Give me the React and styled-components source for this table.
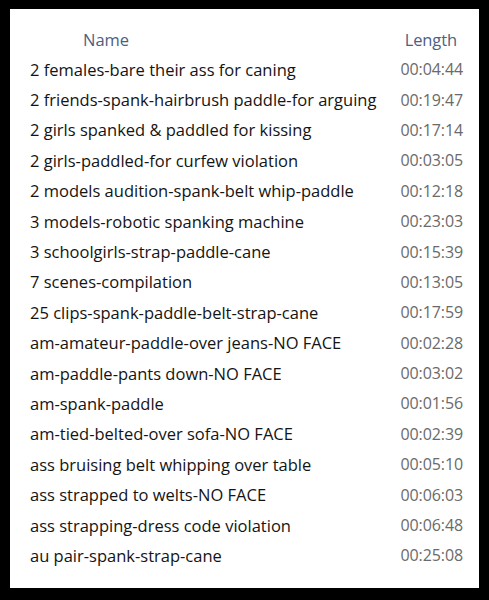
import React from 'react';
import styled, { createGlobalStyle } from 'styled-components';

const GlobalStyle = createGlobalStyle`
  html, body {
    margin: 0;
    padding: 0;
    background: #000;
  }
`;

const Frame = styled.div`
  width: 489px;
  height: 600px;
  background: #000;
  padding: 9px 10px 12px 10px;
  box-sizing: border-box;
`;

const Panel = styled.div`
  background: #fff;
  height: 100%;
  padding: 17px 16px 0 20px;
  box-sizing: border-box;
  font-family: "Open Sans", "Noto Sans", sans-serif;
`;

const Row = styled.div`
  display: grid;
  grid-template-columns: 1fr 84px;
  align-items: center;
  height: ${(p) => (p.$header ? '26px' : '30.4px')};
  margin-bottom: ${(p) => (p.$header ? '2px' : '0')};
`;

const NameCell = styled.div`
  font-size: ${(p) => (p.$header ? '16.5px' : '16.5px')};
  color: ${(p) => (p.$header ? '#4d6082' : '#141414')};
  padding-left: ${(p) => (p.$header ? '53px' : '0')};
  white-space: nowrap;
  letter-spacing: 0;
`;

const LengthCell = styled.div`
  font-size: ${(p) => (p.$header ? '16.5px' : '16px')};
  color: ${(p) => (p.$header ? '#4d6082' : '#6a6a6a')};
  text-align: right;
  padding-right: ${(p) => (p.$header ? '6px' : '0')};
  white-space: nowrap;
  letter-spacing: -0.1px;
`;

const files = [
  ['2 females-bare their ass for caning', '00:04:44'],
  ['2 friends-spank-hairbrush paddle-for arguing', '00:19:47'],
  ['2 girls spanked & paddled for kissing', '00:17:14'],
  ['2 girls-paddled-for curfew violation', '00:03:05'],
  ['2 models audition-spank-belt whip-paddle', '00:12:18'],
  ['3 models-robotic spanking machine', '00:23:03'],
  ['3 schoolgirls-strap-paddle-cane', '00:15:39'],
  ['7 scenes-compilation', '00:13:05'],
  ['25 clips-spank-paddle-belt-strap-cane', '00:17:59'],
  ['am-amateur-paddle-over jeans-NO FACE', '00:02:28'],
  ['am-paddle-pants down-NO FACE', '00:03:02'],
  ['am-spank-paddle', '00:01:56'],
  ['am-tied-belted-over sofa-NO FACE', '00:02:39'],
  ['ass bruising belt whipping over table', '00:05:10'],
  ['ass strapped to welts-NO FACE', '00:06:03'],
  ['ass strapping-dress code violation', '00:06:48'],
  ['au pair-spank-strap-cane', '00:25:08'],
];

export default function App() {
  return (
    <>
      <GlobalStyle />
      <Frame>
        <Panel>
          <Row $header>
            <NameCell $header>Name</NameCell>
            <LengthCell $header>Length</LengthCell>
          </Row>
          {files.map(([name, len]) => (
            <Row key={name}>
              <NameCell>{name}</NameCell>
              <LengthCell>{len}</LengthCell>
            </Row>
          ))}
        </Panel>
      </Frame>
    </>
  );
}
